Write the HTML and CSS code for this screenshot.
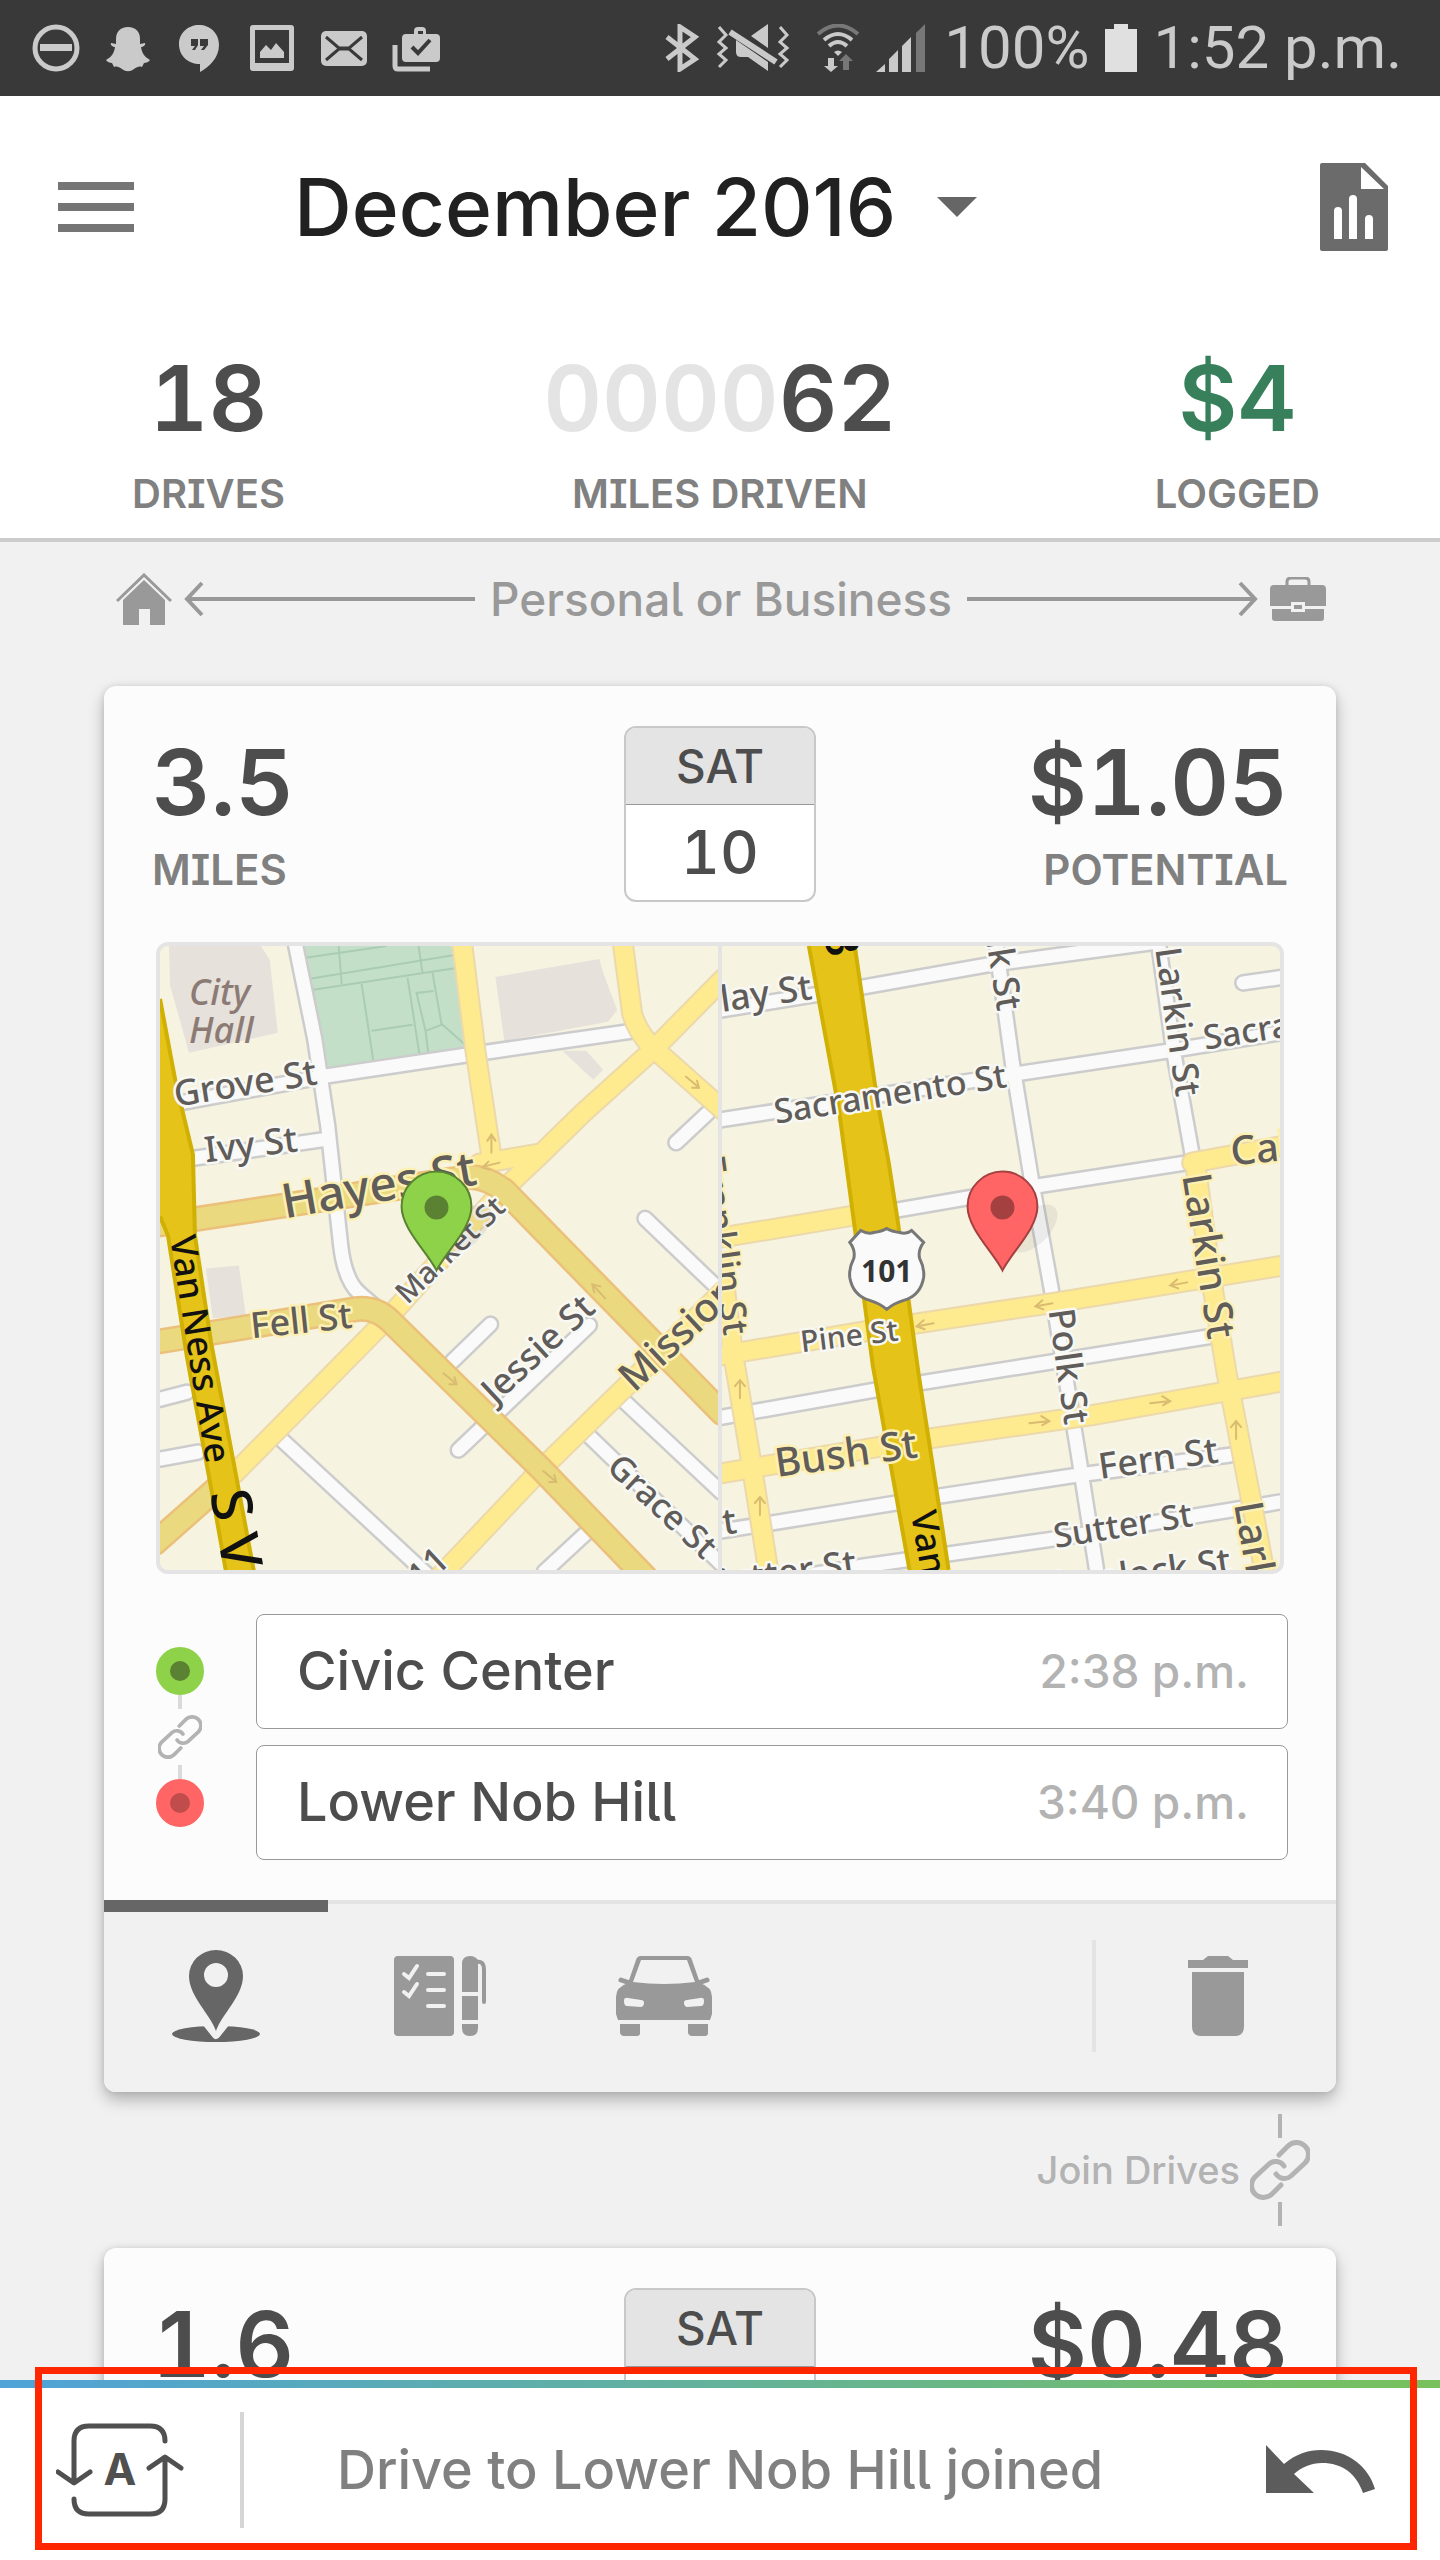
FILE: index.html
```html
<!DOCTYPE html>
<html lang="en">
<head>
    <meta charset="UTF-8">
    <meta name="viewport" content="width=device-width, initial-scale=1.0">
    <title>Drives - December 2016</title>
    <link rel="stylesheet" href="styles.css">
</head>
<body>
    <!-- Android status bar -->
    <div class="status-bar">
        <div class="status-left">
            <svg width="48" height="48" viewBox="0 0 48 48"><circle cx="24" cy="24" r="21" fill="none" stroke="#cacaca" stroke-width="5"/><path d="M8 20h32v7H8z"/></svg>
            <svg width="48" height="48" viewBox="0 0 48 48"><path d="M24 3c8 0 12 5 12 12v5l5-1c1 2-2 4-4 4 1 7 4 10 9 13-1 2-4 3-6 3l-2 4c-3-1-5 0-8 2-4 3-8 3-12 0-3-2-5-3-8-2l-2-4c-2 0-5-1-6-3 5-3 8-6 9-13-2 0-5-2-4-4l5 1v-5c0-7 4-12 12-12z"/></svg>
            <svg width="48" height="48" viewBox="0 0 48 48"><path fill-rule="evenodd" d="M23 1c11 0 20 8 20 20 0 13-10 22-19 27v-8C12 40 3 32 3 20 3 9 12 1 23 1zM15 15v7h4l-3 4h3l3-5v-6zm9 0v7h4l-3 4h3l4-5v-6z"/></svg>
            <svg width="48" height="48" viewBox="0 0 48 48"><path fill-rule="evenodd" d="M5 1h38q3 0 3 3v40q0 3-3 3H5q-3 0-3-3V4q0-3 3-3zm2 5v33h34V6z"/><path d="M12 34v-6l6-7 5 5 5-7 8 9v6z"/></svg>
            <svg width="48" height="48" viewBox="0 0 48 48"><rect x="1" y="7" width="46" height="35" rx="5"/><path d="M6 13l14 12h8l14-12M6 36l14-12h8l14 12" fill="none" stroke="#393939" stroke-width="3"/></svg>
            <svg width="48" height="48" viewBox="0 0 48 48"><path fill-rule="evenodd" d="M22 10V7q0-4 4-4h4q4 0 4 4v3h10q4 0 4 4v20q0 4-4 4H14q-4 0-4-4V14q0-4 4-4zm4 0h5V7h-5z"/><path d="M3 21v21q0 3 3 3h32" fill="none" stroke="#cacaca" stroke-width="5"/><path d="M20 23l6 6 12-13" fill="none" stroke="#393939" stroke-width="4"/></svg>
        </div>
        <div class="status-right">
            <svg width="36" height="48" viewBox="0 0 36 48"><path d="M3 13l28 22-15 10V3l15 10L3 35" fill="none" stroke="#cacaca" stroke-width="5"/></svg>
            <svg width="76" height="48" viewBox="0 0 76 48"><path d="M3 3l7 8-7 7 7 6-7 6 7 6-7 7M64 3l7 8-7 7 7 6-7 6 7 6-7 7" fill="none" stroke="#cacaca" stroke-width="3"/><path d="M52 0v24L35 12zM20 16l32 22v9L32 33h-7q-5 0-5-5z"/><path d="M14 8l46 30" stroke="#cacaca" stroke-width="6"/></svg>
            <svg width="52" height="48" viewBox="0 0 52 48"><g fill="none" stroke="#cacaca" stroke-width="4"><path d="M10 10q20-17 40 0" stroke="#777"/><path d="M16 16q14-12 28 0M21 22q9-8 18 0"/></g><path d="M26 28q4-3 8 0l-4 4zM20 34h6v8h4l-7 6-7-6h4z"/><path d="M35 46h6v-9h4l-7-7-7 7h4z" fill="#777"/></svg>
            <svg width="52" height="48" viewBox="0 0 52 48"><path d="M0 48l9-8v8zM13 48V35l9-9v22zM26 48V22l9-9v35z"/><path d="M40 48V9l9-9v48z" fill="#777"/></svg>
            <span>100%</span>
            <svg width="32" height="48" viewBox="0 0 32 48"><path d="M9 0h14v5h9v43H0V5h9z" fill="#e0e0e0"/></svg>
            <span>1:52 p.m.</span>
        </div>
    </div>

    <header class="header">
        <div class="toolbar">
            <button class="icon-button" aria-label="Menu">
                <svg width="76" height="50" viewBox="0 0 76 50"><path d="M0 0h76v8H0zM0 21h76v8H0zM0 42h76v8H0z" fill="#757575"/></svg>
            </button>
            <div class="month">
                <select class="month-select" aria-label="Month">
                    <option>December 2016</option>
                </select>
                <svg width="40" height="20" viewBox="0 0 40 20"><path d="M0 0h40L20 20z" fill="#666"/></svg>
            </div>
            <button class="icon-button report" aria-label="Report">
                <svg width="68" height="88" viewBox="0 0 68 88"><path d="M2 0h43l23 23v63q0 2-2 2H2q-2 0-2-2V2q0-2 2-2z" fill="#6b6b6b"/><path d="M41 4v22h23zM14 76V48a4 4 0 0 1 8 0v28zM29 76V36a4 4 0 0 1 8 0v40zM45 76V56a4 4 0 0 1 8 0v20z" fill="#fff"/></svg>
            </button>
        </div>
        <div class="stats">
            <div class="stat"><div class="number">18</div><div class="stat-label">DRIVES</div></div>
            <div class="stat"><div class="number"><span class="zeros">0000</span>62</div><div class="stat-label">MILES DRIVEN</div></div>
            <div class="stat"><div class="number green">$4</div><div class="stat-label">LOGGED</div></div>
        </div>
    </header>

    <main class="drives">
        <div class="swipe-hint">
            <svg width="56" height="52" viewBox="0 0 56 52"><path d="M1 28L28 2l27 26" fill="none" stroke="#999" stroke-width="3"/><path d="M7 27L28 7l21 20v25H34V36H23v16H7z" fill="#999"/></svg>
            <span class="arrow arrow-left"><svg width="20" height="36" viewBox="0 0 20 36"><path d="M18 2L3 18l15 16"/></svg></span>
            <span>Personal or Business</span>
            <span class="arrow arrow-right"><svg width="20" height="36" viewBox="0 0 20 36"><path d="M2 2l15 16L2 34"/></svg></span>
            <svg width="56" height="44" viewBox="0 0 56 44"><path d="M17 9V5q0-4 4-4h14q4 0 4 4v4" fill="none" stroke="#999" stroke-width="3"/><path d="M4 8h48q4 0 4 4v17H35v-4H21v4H0V12q0-4 4-4zM2 32h19v3h14v-3h19v9q0 3-3 3H5q-3 0-3-3zM24 28h8v4h-8z" fill="#999"/></svg>
        </div>

        <article class="card">
            <div class="card-body">
                <div class="card-head">
                    <div class="side"><div class="number">3.5</div><div class="card-label">MILES</div></div>
                    <div class="date"><div class="date-day">SAT</div><div class="date-num">10</div></div>
                    <div class="side side-right"><div class="number">$1.05</div><div class="card-label">POTENTIAL</div></div>
                </div>

                <div class="maps">
                    <!-- Start of the drive -->
                    <svg class="map" viewBox="0 0 559 625" preserveAspectRatio="xMidYMid slice">
                        <g fill="#e6e1db">
                            <path d="M9 0h92l9 14 8 73-89 20L10 39z"/>
                            <path d="M336 31l104-18 4 14 14 37-9 12-104 19z"/>
                            <path d="M403 105h24l17 19-10 10zM46 323l33-3 7 51-33 2z"/>
                        </g>
                        <path d="M144 0h148l16 105-142 17z" fill="#c4dfc8"/>
                        <path d="M144 12l83-12M149 33l146-24M152 44l145-22M179 0l3 38M259 0l4 27M202 38l12 79M212 85l41-6M248 32l12 77M273 27l9 51 26 23M274 45l-17 2 9 38 16-6M266 85l3 24" fill="none" stroke="#aaccb3" stroke-width="2"/>
                        <path class="casing" d="M136 0l19 93 13 87 13 120q4 35 19 48l27 23M21 157l147-27 140-21 167-24M31 213l133-19M0 454l27-7M0 514l38-7M118 491l152 141M293 416l38-37M299 505l131-125M430 491l132 128M465 456l97 91M427 588l-42 39M517 197l32-30M486 273l76 73"/>
                        <path class="street" d="M136 0l19 93 13 87 13 120q4 35 19 48l27 23M21 157l147-27 140-21 167-24M31 213l133-19M0 454l27-7M0 514l38-7M118 491l152 141M293 416l38-37M299 505l131-125M430 491l132 128M465 456l97 91M427 588l-42 39M517 197l32-30M486 273l76 73"/>
                        <path class="yellow-casing" d="M303 0l13 105 16 106M464 0l9 68q6 20 22 35l70 62M565 32l-70 71-71 64-44 43-37 35-113 126L75 528M565 345l-98 96-85 83-102 108M380 208l-60 10"/>
                        <path class="yellow" d="M303 0l13 105 16 106M464 0l9 68q6 20 22 35l70 62M565 32l-70 71-71 64-44 43-37 35-113 126L75 528M565 345l-98 96-85 83-102 108M380 208l-60 10"/>
                        <path class="orange-casing" d="M0 279l131-20 174-27q18-3 40 13l218 223M0 396l195-32q20-3 35 11l152 149 104 108M-5 598l60-53"/>
                        <path class="orange" d="M0 279l131-20 174-27q18-3 40 13l218 223M0 396l195-32q20-3 35 11l152 149 104 108M-5 598l60-53"/>
                        <path d="M0 53l16 85 17 71 2 81 16 106 24 128 19 102H66L53 553 27 412 8 290l-8-19z" fill="#e6c318"/>
                        <path d="M0 53l16 85 17 71 2 81 16 106 24 128 19 102M66 626L53 553 27 412 8 290l-8-19" fill="none" stroke="#cfb003" stroke-width="4"/>
                        <path class="way" d="M332 207v-17m-4 5l4-6 4 6M340 217l-16 4m5-5l-6 6 7 2M527 131l12 10m-1-6l2 7-7 0M284 428l12 10m-1-6l2 7-7 0M384 526l12 10m-1-6l2 7-7 0M446 353l-12-13m1 7l-2-8 8 2"/>
                        <g class="map-text">
                            <g class="place"><text x="29" y="59">City</text><text x="29" y="97">Hall</text></g>
                            <text transform="translate(16 161) rotate(-9)">Grove St</text>
                            <text transform="translate(46 217) rotate(-7)">Ivy St</text>
                            <text class="on-yellow big" transform="translate(125 273) rotate(-10)">Hayes St</text>
                            <text class="on-yellow" transform="translate(92 393) rotate(-6)">Fell St</text>
                            <text class="small" transform="translate(248 360) rotate(-44)">Market St</text>
                            <text transform="translate(336 460) rotate(-43)">Jessie St</text>
                            <text class="on-yellow mid" transform="translate(475 448) rotate(-43)">Mission St</text>
                            <text class="narrow" transform="translate(446 524) rotate(43)">Grace St</text>
                            <text transform="translate(262 646) rotate(-43)">11</text>
                            <text class="highway" transform="translate(10 292) rotate(81)">Van Ness Ave</text>
                            <text class="highway xl" transform="translate(50 548) rotate(80)">S V</text>
                        </g>
                        <ellipse cx="308" cy="283" rx="30" ry="16" transform="rotate(-45 308 283)" fill="#000" opacity=".06"/>
                        <path d="M277 325c-9-18-35-42-35-64a35 35 0 0 1 70 0c0 22-26 46-35 64z" fill="#8dd248" stroke="#5a8232" stroke-width="2"/>
                        <circle cx="277" cy="262" r="12" fill="#5a8232"/>
                    </svg>
                    <!-- End of the drive -->
                    <svg class="map" viewBox="0 0 559 625" preserveAspectRatio="xMidYMid slice">
                        <path class="casing" d="M0 64l142-23 130-23L436-4M0 174l295-46 153-23 111-18M274-5l17 123 19 116 21 116 25 153 20 127M437-5l16 114 18 100M172 265l146-25 149-23M522 37l42-6M0 472l153-27 337-54M0 586l218-35 138-21 153-20M0 645l142-24 191-27 226-37"/>
                        <path class="street" d="M0 64l142-23 130-23L436-4M0 174l295-46 153-23 111-18M274-5l17 123 19 116 21 116 25 153 20 127M437-5l16 114 18 100M172 265l146-25 149-23M522 37l42-6M0 472l153-27 337-54M0 586l218-35 138-21 153-20M0 645l142-24 191-27 226-37"/>
                        <path class="yellow-casing" d="M0 292l150-25M471 217l92-17M0 410l149-25 180-27 234-38M0 528l210-35 161-23 192-34M474 217l16 116 15 92 27 140 12 65M0 320l11 88 16 95 20 127"/>
                        <path class="yellow" d="M0 292l150-25M471 217l92-17M0 410l149-25 180-27 234-38M0 528l210-35 161-23 192-34M474 217l16 116 15 92 27 140 12 65M0 320l11 88 16 95 20 127"/>
                        <path d="M87 0l30 163 15 112 19 145 37 206h39l-9-61-21-136-21-154-9-58-12-66L133 0z" fill="#e6c318"/>
                        <path d="M87 0l30 163 15 112 19 145 37 206M227 625l-9-60-21-136-21-154-9-58-12-66L133 0" fill="none" stroke="#cfb003" stroke-width="4"/>
                        <path class="way" d="M212 378l-16 3m6-6l-7 6 8 3M331 358l-16 3m6-6l-7 6 8 3M466 337l-16 3m6-6l-7 6 8 3M308 478l18-2m-6-5l8 5-7 4M429 458l18-2m-6-5l8 5-7 4M18 453v-17m-5 5l5-6 5 6M38 570v-17m-5 5l5-6 5 6M515 494v-17m-5 5l5-6 5 6"/>
                        <g class="map-text">
                            <text class="small" transform="translate(80 407) rotate(-7)">Pine St</text>
                            <text transform="translate(0 66) rotate(-8)">lay St</text>
                            <text class="narrow" transform="translate(54 178) rotate(-9)">Sacramento St</text>
                            <text class="narrow" transform="translate(484 104) rotate(-9)">Sacramento St</text>
                            <text class="on-yellow mid" transform="translate(511 220) rotate(-6)">California St</text>
                            <text transform="translate(276 66) rotate(81)" text-anchor="end">Polk St</text>
                            <text transform="translate(434 3) rotate(82)">Larkin St</text>
                            <text class="on-yellow mid" transform="translate(461 230) rotate(81)">Larkin St</text>
                            <text transform="translate(327 365) rotate(82)">Polk St</text>
                            <text class="on-yellow" transform="translate(2 391) rotate(82)" text-anchor="end">Franklin St</text>
                            <text class="on-yellow mid" transform="translate(55 532) rotate(-8)">Bush St</text>
                            <text transform="translate(379 534) rotate(-8)">Fern St</text>
                            <text class="narrow" transform="translate(334 603) rotate(-9)">Sutter St</text>
                            <text class="on-yellow mid" transform="translate(513 559) rotate(80)">Larkin St</text>
                            <text transform="translate(16 588) rotate(-8)" text-anchor="end">Fern St</text>
                            <text transform="translate(136 630) rotate(-8)" text-anchor="end">Sutter St</text>
                            <text transform="translate(511 628) rotate(-8)" text-anchor="end">Hemlock St</text>
                            <text class="highway" transform="translate(189 568) rotate(80)">Van Ness Ave</text>
                            <text class="highway big" transform="translate(106 13) rotate(80)" text-anchor="end">(B</text>
                        </g>
                        <path d="M139 285q7 4 13 2 8-1 13-4 5 3 13 4 7 2 12-2l12 12q-6 8-4 16 5 10 4 19-3 18-20 23-10 3-17 9-7-6-17-9-17-5-20-23-1-9 4-19 2-8-4-16z" fill="#fafafa" stroke="#777" stroke-width="3"/>
                        <text class="route-number" x="165" y="337" text-anchor="middle">101</text>
                        <ellipse cx="312" cy="283" rx="30" ry="16" transform="rotate(-45 312 283)" fill="#000" opacity=".06"/>
                        <path d="M281 325c-9-18-35-42-35-64a35 35 0 0 1 70 0c0 22-26 46-35 64z" fill="#ff6565" stroke="#a54040" stroke-width="2"/>
                        <circle cx="281" cy="262" r="12" fill="#a54040"/>
                    </svg>
                </div>

                <div class="route">
                    <div class="rail">
                        <span class="dot dot-start"></span>
                        <span class="rail-line"></span>
                        <svg class="link" width="44" height="56" viewBox="0 -8 60 76"><path d="M29 15l9-9a12 12 0 0 1 17 17L41 36a10 10 0 0 1-15-2M31 45l-9 9a12 12 0 0 1-17-17l14-13a10 10 0 0 1 15 2"/></svg>
                        <span class="rail-line"></span>
                        <span class="dot dot-end"></span>
                    </div>
                    <div class="fields">
                        <label class="field"><input type="text" value="Civic Center" aria-label="Start location"><time>2:38 p.m.</time></label>
                        <label class="field"><input type="text" value="Lower Nob Hill" aria-label="End location"><time>3:40 p.m.</time></label>
                    </div>
                </div>
            </div>

            <div class="tabs">
                <button class="tab active" aria-label="Location">
                    <svg width="88" height="92" viewBox="0 0 88 92"><ellipse cx="44" cy="84" rx="44" ry="8" fill="#666"/><path d="M32 70l12 15 12-15" fill="none" stroke="#f1f1f1" stroke-width="8" stroke-linejoin="round"/><path fill-rule="evenodd" d="M44 81C38 64 17 46 17 26a27 26 0 0 1 54 0c0 20-21 38-27 55zm0-68a12 12 0 1 0 0 24 12 12 0 0 0 0-24z" fill="#666"/></svg>
                </button>
                <button class="tab" aria-label="Notes">
                    <svg width="92" height="80" viewBox="0 0 92 80"><rect width="60" height="80" rx="4" fill="#999"/><path d="M34 18h16M34 34h16M34 50h16M10 18l5 4 8-12M10 36l5 4 8-12" fill="none" stroke="#f1f1f1" stroke-width="4" stroke-linecap="round"/><path d="M68 36V8q0-8 8-8 5 0 8 4v32zM68 40h16v24H68zM68 68h16v4q0 8-8 8t-8-8z" fill="#999"/><path d="M82 6q8-2 8 8v32" fill="none" stroke="#999" stroke-width="4" stroke-linecap="round"/></svg>
                </button>
                <button class="tab" aria-label="Vehicle">
                    <svg width="96" height="80" viewBox="0 0 96 80"><path fill-rule="evenodd" d="M12 27L20 4q1-4 5-4h46q4 0 5 4l8 23q12 4 12 14v17l-2 6H2l-2-6V41q0-10 12-14zM25 4l-8 22q31 4 62 0L71 4zM8 45q0-4 4-3l13 2q3 0 3 3t-3 4l-14-1q-3 0-3-5zm80 0q0-4-4-3l-13 2q-3 0-3 3t3 4l14-1q3 0 3-5z" fill="#999"/><path d="M4 68h20v9q0 3-3 3H8q-3 0-4-3zM72 68h20v9q0 3-3 3H76q-3 0-4-3z" fill="#999"/><path d="M5 24l9 3M91 24l-9 3" stroke="#999" stroke-width="5" stroke-linecap="round"/></svg>
                </button>
                <button class="tab tab-delete" aria-label="Delete drive">
                    <svg width="60" height="80" viewBox="0 0 60 80"><path d="M0 4h15l5-4h20l5 4h15v8H0zM4 16h52v54q0 10-9 10H13q-9 0-9-10z" fill="#999"/></svg>
                </button>
            </div>
        </article>

        <button class="join">
            <span>Join Drives</span>
            <span class="join-link">
                <span class="join-line"></span>
                <svg class="link" width="60" height="64" viewBox="0 -2 60 64"><path d="M29 15l9-9a12 12 0 0 1 17 17L41 36a10 10 0 0 1-15-2M31 45l-9 9a12 12 0 0 1-17-17l14-13a10 10 0 0 1 15 2"/></svg>
                <span class="join-line"></span>
            </span>
        </button>

        <article class="card">
            <div class="card-body">
                <div class="card-head">
                    <div class="side"><div class="number">1.6</div><div class="card-label">MILES</div></div>
                    <div class="date"><div class="date-day">SAT</div><div class="date-num">10</div></div>
                    <div class="side side-right"><div class="number">$0.48</div><div class="card-label">POTENTIAL</div></div>
                </div>
            </div>
        </article>
    </main>

    <footer class="toast">
        <svg class="auto" width="128" height="94" viewBox="0 0 128 94"><path d="M109 18q0-15-15-15H33Q18 3 18 18v41M2 49l16 11 16-11M18 76q0 15 15 15h61q15 0 15-15V35M93 45l16-11 16 11" fill="none" stroke="#505050" stroke-width="5" stroke-linecap="round" stroke-linejoin="round"/><text x="64" y="62" text-anchor="middle">A</text></svg>
        <p class="toast-text">Drive to Lower Nob Hill joined</p>
        <button class="icon-button" aria-label="Undo">
            <svg width="110" height="50" viewBox="0 0 110 50"><path d="M0 0l18 19C30 9 42 5 55 5c27 0 48 17 54 39l-12 4C90 28 76 18 56 18c-11 0-20 4-28 11l20 19H0z" fill="#5c5c5c"/></svg>
        </button>
        <div class="highlight"></div>
    </footer>
</body>
</html>
```
FILE: styles.css
```css
:root {
    --dark: #4d4d4d;
    --gray: #808080;
    --mid-gray: #999;
    --light-gray: #b3b3b3;
    --bg: #f1f1f1;
    --line: #e4e4e4;
}

* {
    margin: 0;
    padding: 0;
    box-sizing: border-box;
}

body {
    display: flex;
    flex-direction: column;
    height: 100vh;
    overflow: hidden;
    background: var(--bg);
    color: var(--dark);
    font-family: Inter, "Noto Sans", sans-serif;
    font-feature-settings: "cv05", "cv08";
}

svg {
    display: block;
    flex: none;
}

button, input, select {
    font: inherit;
    font-feature-settings: inherit;
    color: inherit;
    border: none;
    background: none;
}

button {
    cursor: pointer;
}

/* Status bar */
.status-bar {
    flex: none;
    display: flex;
    justify-content: space-between;
    align-items: center;
    height: 96px;
    padding: 0 38px 0 32px;
    background: #393939;
    color: #cacaca;
    fill: #cacaca;
    font-family: Roboto, sans-serif;
    font-size: 60px;
    line-height: 72px;
}

.status-left {
    display: flex;
    gap: 24px;
}

.status-right {
    display: flex;
    align-items: center;
    gap: 16px;
    white-space: nowrap;
}

/* Header */
.header {
    flex: none;
    background: #fff;
    border-bottom: 4px solid #ccc;
}

.toolbar {
    display: flex;
    align-items: center;
    height: 222px;
    padding: 0 52px 0 58px;
}

.icon-button {
    flex: none;
}

.month {
    display: flex;
    align-items: center;
    gap: 40px;
    margin-left: 160px;
}

.month-select {
    appearance: none;
    color: #212121;
    font-size: 80px;
    font-weight: 500;
    line-height: 96px;
}

.report {
    margin-left: auto;
}

.stats {
    display: flex;
    justify-content: space-between;
    padding: 32px 120px 20px 132px;
}

.stat {
    display: flex;
    flex-direction: column;
    align-items: center;
    gap: 24px;
}

.number {
    font-size: 91px;
    font-weight: 600;
    font-variant-numeric: tabular-nums;
    line-height: 96px;
}

.zeros {
    color: #e4e4e4;
}

.green {
    color: #38805c;
}

.stat-label {
    color: var(--gray);
    font-size: 40px;
    font-weight: 600;
    line-height: 48px;
}

/* Drives list */
.drives {
    flex: 1;
    min-height: 0;
    overflow: hidden;
}

.swipe-hint {
    display: flex;
    align-items: center;
    gap: 12px;
    height: 114px;
    padding: 0 114px 0 116px;
    color: var(--mid-gray);
    font-size: 46px;
    font-weight: 500;
    line-height: 56px;
}

.arrow {
    flex: 1;
    display: flex;
    align-items: center;
    background: linear-gradient(var(--mid-gray), var(--mid-gray)) center / calc(100% - 6px) 4px no-repeat;
}

.arrow-right {
    justify-content: flex-end;
}

.arrow path {
    fill: none;
    stroke: var(--mid-gray);
    stroke-width: 4;
}

.card {
    margin: 30px 104px 0;
    border-radius: 12px;
    background: #fcfcfc;
    box-shadow: 0 8px 16px rgba(0, 0, 0, 0.26), 0 0 6px rgba(0, 0, 0, 0.1);
}

.join + .card {
    margin-top: 0;
}

.card-body {
    padding: 40px 48px;
}

.card-head {
    display: grid;
    grid-template-columns: 1fr 192px 1fr;
    align-items: center;
}

.side {
    display: flex;
    flex-direction: column;
    gap: 16px;
}

.side-right {
    text-align: right;
}

.card-label {
    color: var(--gray);
    font-size: 42px;
    font-weight: 600;
    line-height: 48px;
}

.date {
    border: 2px solid #c8c8c8;
    border-radius: 12px;
    overflow: hidden;
    background: #fff;
    font-weight: 500;
    text-align: center;
}

.date-day {
    background: var(--line);
    border-bottom: 1px solid var(--mid-gray);
    font-size: 46px;
    line-height: 76px;
}

.date-num {
    font-size: 60px;
    font-variant-numeric: tabular-nums;
    line-height: 95px;
}

/* Maps */
.maps {
    display: grid;
    grid-template-columns: 1fr 1fr;
    gap: 4px;
    margin: 40px 4px;
    border: 4px solid var(--line);
    border-radius: 12px;
    background: var(--line);
    overflow: hidden;
}

.map {
    width: 100%;
    height: auto;
    background: #f6f3e1;
}

.casing, .street, .yellow-casing, .yellow, .orange-casing, .orange, .way {
    fill: none;
    stroke-linecap: round;
}

.casing {
    stroke: #ccc;
    stroke-width: 18;
}

.street {
    stroke: #fafafa;
    stroke-width: 13;
}

.yellow-casing {
    stroke: #ecd9ab;
    stroke-width: 22;
}

.yellow {
    stroke: #feea8f;
    stroke-width: 18;
}

.orange-casing {
    stroke: #ebc07a;
    stroke-width: 26;
}

.orange {
    stroke: #ead97f;
    stroke-width: 21;
}

.way {
    stroke: #d9bb72;
    stroke-width: 2;
}

.map-text {
    fill: #605c5a;
    stroke: #f8f8f4;
    stroke-width: 5;
    stroke-linejoin: round;
    paint-order: stroke;
    font-family: "Noto Sans", "Open Sans", sans-serif;
    font-size: 36px;
    font-weight: 500;
}

.place {
    fill: #8c7b75;
    stroke: none;
    font-style: italic;
}

.small {
    font-size: 30px;
}

.narrow {
    font-size: 34px;
}

.mid {
    font-size: 40px;
}

.big {
    font-size: 48px;
}

.xl {
    font-size: 56px;
}

.on-yellow {
    stroke: #fdf0b4;
}

.highway {
    fill: #111;
    stroke: none;
}

.route-number {
    fill: #333;
    font-family: "Noto Sans", "Open Sans", sans-serif;
    font-size: 30px;
    font-weight: 700;
}

/* Route */
.route {
    display: flex;
    align-items: center;
    gap: 52px;
    padding-left: 4px;
}

.rail {
    display: flex;
    flex-direction: column;
    align-items: center;
    width: 48px;
}

.dot {
    width: 48px;
    height: 48px;
    border: 14px solid #8dd248;
    border-radius: 50%;
    background: #5a8232;
}

.dot-end {
    border-color: #ff6565;
    background: #c04c4c;
}

.rail-line {
    width: 4px;
    height: 14px;
    background: #dadada;
}

.link path {
    fill: none;
    stroke: var(--light-gray);
    stroke-width: 5;
    stroke-linecap: round;
}

.fields {
    flex: 1;
    display: flex;
    flex-direction: column;
    gap: 16px;
}

.field {
    display: flex;
    align-items: center;
    height: 115px;
    padding: 0 38px 0 40px;
    border: 1px solid var(--mid-gray);
    border-radius: 8px;
    background: #fff;
    font-weight: 500;
}

.field input {
    flex: 1;
    min-width: 0;
    font-size: 54px;
    line-height: 64px;
}

.field time {
    color: var(--light-gray);
    font-size: 46px;
}

/* Tabs */
.tabs {
    display: flex;
    height: 192px;
    border-radius: 0 0 12px 12px;
    background: var(--bg);
    box-shadow: inset 0 4px var(--line);
}

.tab {
    position: relative;
    display: flex;
    justify-content: center;
    align-items: center;
    width: 224px;
}

.active::before {
    content: "";
    position: absolute;
    top: 0;
    left: 0;
    right: 0;
    height: 12px;
    background: #666;
}

.tab-delete {
    width: 236px;
    margin-left: auto;
}

.tab-delete::before {
    content: "";
    position: absolute;
    left: -8px;
    width: 4px;
    height: 112px;
    background: var(--line);
}

/* Join drives */
.join {
    display: flex;
    align-items: center;
    gap: 10px;
    height: 156px;
    margin-left: auto;
    padding-right: 130px;
    color: var(--light-gray);
    font-size: 38px;
    font-weight: 500;
}

.join-link {
    display: flex;
    flex-direction: column;
    align-items: center;
}

.join-line {
    width: 4px;
    height: 24px;
    background: var(--light-gray);
}

/* Toast */
.toast {
    position: relative;
    flex: none;
    display: flex;
    align-items: center;
    height: 180px;
    padding: 0 64px 0 56px;
    background: linear-gradient(to right, #4fa3d8, #78c15c) top / 100% 8px no-repeat #fff;
}

.auto text {
    fill: #505050;
    font-size: 44px;
    font-weight: 700;
}

.toast-text {
    flex: 1;
    margin-left: 56px;
    padding-right: 70px;
    border-left: 4px solid #d6d6d6;
    color: var(--gray);
    font-size: 54px;
    font-weight: 500;
    line-height: 116px;
    text-align: center;
}

.highlight {
    position: absolute;
    top: -13px;
    right: 23px;
    bottom: 10px;
    left: 35px;
    border: 7px solid #ff2600;
    pointer-events: none;
}
```
